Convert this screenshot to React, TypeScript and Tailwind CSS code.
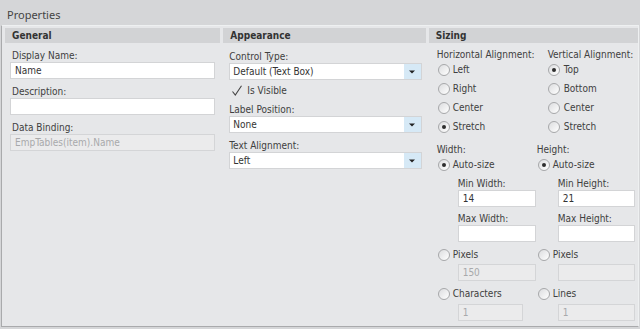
import React from "react";

const Radio = ({ checked = false }: { checked?: boolean }) => (
  <span className="w-[12px] h-[12px] rounded-full border border-[#a7a8aa] bg-linear-to-br from-[#dcdddf] to-[#ffffff] flex items-center justify-center shrink-0">
    {checked && <span className="w-[4px] h-[4px] rounded-full bg-[#2d2d2d]" />}
  </span>
);

const RadioRow = ({ label, checked = false, gap = "gap-[3px]" }: { label: string; checked?: boolean; gap?: string }) => (
  <div className={`h-[19px] flex items-center ${gap}`}>
    <Radio checked={checked} />
    <span className="leading-[12px]">{label}</span>
  </div>
);

const TextInput = ({ value = "", disabled = false, className = "" }: { value?: string; disabled?: boolean; className?: string }) => (
  <div
    className={`h-[17px] border flex items-center pl-[4px] leading-[12px] ${
      disabled ? "bg-[#ebebec] border-[#d4d5d7] text-[#a8a9ab]" : "bg-white border-[#d3d4d6] text-[#333]"
    } ${className}`}
  >
    {value}
  </div>
);

const Select = ({ value }: { value: string }) => (
  <div className="h-[17px] bg-white border border-[#d3d4d6] flex items-stretch">
    <div className="flex-1 flex items-center pl-[3px] leading-[12px] text-[#333]">{value}</div>
    <div className="w-[17px] bg-[#d6e9f6] flex items-center justify-center">
      <svg width="6" height="4" viewBox="0 0 6 4">
        <path d="M0 0.5 L6 0.5 L3 3.5 Z" fill="#222" />
      </svg>
    </div>
  </div>
);

const Header = ({ children }: { children: React.ReactNode }) => (
  <div className="h-[15px] bg-[#d2d3d5] pl-[7px] flex items-center font-bold text-[#333] leading-[12px]">{children}</div>
);

const Label = ({ children, className = "" }: { children: React.ReactNode; className?: string }) => (
  <div className={`leading-[13px] h-[13px] ${className}`}>{children}</div>
);

export default function App() {
  return (
    <div className="w-[640px] h-[329px] bg-[#d5d6d8] flex flex-col font-['DejaVu_Sans_Condensed','DejaVu_Sans',sans-serif] text-[10px] text-[#404040] overflow-hidden">
      <div className="h-[25px] pl-[7px] pt-[7px] font-['Noto_Sans',sans-serif] text-[11px] leading-[16px] text-[#444]">
        Properties
      </div>
      <div className="flex-1 ml-[1px] mr-[1px] mb-[2px] border border-[#eef0f1] border-l-[#a9aaac] border-b-[#a9aaac] bg-[#e6e7e9] flex gap-[3px] pl-[3px] pt-[2px]">
        {/* General */}
        <div className="w-[216px] flex flex-col">
          <Header>General</Header>
          <div className="px-[5px] flex flex-col">
            <Label className="mt-[6px] pl-[2px]">Display Name:</Label>
            <TextInput value="Name" />
            <Label className="mt-[6px] pl-[2px]">Description:</Label>
            <TextInput />
            <Label className="mt-[6px] pl-[2px]">Data Binding:</Label>
            <TextInput value="EmpTables(item).Name" disabled />
          </div>
        </div>

        {/* Appearance */}
        <div className="w-[203px] flex flex-col">
          <Header>Appearance</Header>
          <div className="pl-[6px] pr-[4px] flex flex-col">
            <Label className="mt-[7px]">Control Type:</Label>
            <Select value="Default (Text Box)" />
            <div className="h-[21px] flex items-center gap-[4px] pl-[2px]">
              <svg width="12" height="12" viewBox="0 0 12 12">
                <path d="M1.5 6.5 L4.3 10 L10.5 0.8" stroke="#444" strokeWidth="1.1" fill="none" />
              </svg>
              <span className="leading-[12px]">Is Visible</span>
            </div>
            <Label className="mt-[2px]">Label Position:</Label>
            <Select value="None" />
            <Label className="mt-[6px]">Text Alignment:</Label>
            <Select value="Left" />
          </div>
        </div>

        {/* Sizing */}
        <div className="w-[210px] flex flex-col">
          <Header>Sizing</Header>
          <div className="pl-[8px] flex flex-col">
            <div className="flex">
              <div className="w-[111px] flex flex-col">
                <div className="mt-[6px] leading-[12px] h-[12px] whitespace-nowrap">Horizontal Alignment:</div>
                <div className="pl-[1px] -mt-[1px]">
                  <RadioRow label="Left" />
                  <RadioRow label="Right" />
                  <RadioRow label="Center" />
                  <RadioRow label="Stretch" checked />
                </div>
              </div>
              <div className="flex flex-col">
                <div className="mt-[6px] leading-[12px] h-[12px] whitespace-nowrap">Vertical Alignment:</div>
                <div className="-mt-[1px]">
                  <RadioRow label="Top" checked gap="gap-[4px]" />
                  <RadioRow label="Bottom" gap="gap-[4px]" />
                  <RadioRow label="Center" gap="gap-[4px]" />
                  <RadioRow label="Stretch" gap="gap-[4px]" />
                </div>
              </div>
            </div>

            <div className="flex">
              <div className="w-[100px] flex flex-col">
                <div className="mt-[8px] leading-[12px] h-[12px]">Width:</div>
                <div className="pl-[1px] -mt-[1px]">
                  <RadioRow label="Auto-size" checked />
                </div>
                <div className="pl-[21px] flex flex-col">
                  <Label className="mt-[3px]">Min Width:</Label>
                  <TextInput value="14" className="w-[78px]" />
                  <Label className="mt-[5px]">Max Width:</Label>
                  <TextInput className="w-[78px]" />
                </div>
                <div className="pl-[1px] mt-[3px]">
                  <RadioRow label="Pixels" />
                </div>
                <div className="pl-[21px]">
                  <TextInput value="150" disabled className="w-[78px]" />
                </div>
                <div className="pl-[1px] mt-[3px]">
                  <RadioRow label="Characters" />
                </div>
                <div className="pl-[21px] mt-[1px]">
                  <TextInput value="1" disabled className="w-[65px]" />
                </div>
              </div>
              <div className="flex flex-col">
                <div className="mt-[8px] leading-[12px] h-[12px]">Height:</div>
                <div className="pl-[1px] -mt-[1px]">
                  <RadioRow label="Auto-size" checked />
                </div>
                <div className="pl-[21px] flex flex-col">
                  <Label className="mt-[3px]">Min Height:</Label>
                  <TextInput value="21" className="w-[77px]" />
                  <Label className="mt-[5px]">Max Height:</Label>
                  <TextInput className="w-[77px]" />
                </div>
                <div className="pl-[1px] mt-[3px]">
                  <RadioRow label="Pixels" />
                </div>
                <div className="pl-[21px]">
                  <TextInput disabled className="w-[77px]" />
                </div>
                <div className="pl-[1px] mt-[3px]">
                  <RadioRow label="Lines" />
                </div>
                <div className="pl-[21px] mt-[1px]">
                  <TextInput value="1" disabled className="w-[77px]" />
                </div>
              </div>
            </div>
          </div>
        </div>
      </div>
    </div>
  );
}
